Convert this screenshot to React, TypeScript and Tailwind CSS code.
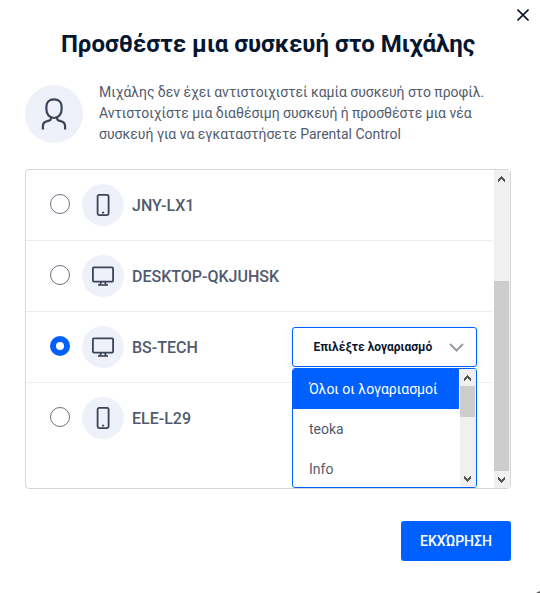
import React, { useState } from 'react';

type DeviceType = 'phone' | 'desktop';

interface Device {
  id: number;
  name: string;
  type: DeviceType;
}

const devices: Device[] = [
  { id: 1, name: 'JNY-LX1', type: 'phone' },
  { id: 2, name: 'DESKTOP-QKJUHSK', type: 'desktop' },
  { id: 3, name: 'BS-TECH', type: 'desktop' },
  { id: 4, name: 'ELE-L29', type: 'phone' },
];

const accounts = ['Όλοι οι λογαριασμοί', 'teoka', 'Info'];

const UserIcon = () => (
  <svg width="26" height="32" viewBox="0 0 26 32" fill="none" stroke="#3a4358" strokeWidth="2.2">
    <path d="M13 1.4C17.6 1.4 20.6 4.2 20.6 8.6V11.6C20.6 16.4 17.4 20 13 20S5.4 16.4 5.4 11.6V8.6C5.4 4.2 8.4 1.4 13 1.4Z" />
    <path d="M10 19.6V20.4C10 21.7 9.2 22.2 8 22.6L5.2 23.5C2.8 24.3 1.9 25.8 1.9 28V31.4" />
    <path d="M16 19.6V20.4C16 21.7 16.8 22.2 18 22.6L20.8 23.5C23.2 24.3 24.1 25.8 24.1 28V31.4" />
  </svg>
);

const PhoneIcon = () => (
  <svg width="14" height="22" viewBox="0 0 14 22" fill="none" stroke="#3a4358" strokeWidth="1.8">
    <rect x="1.6" y="0.9" width="11" height="20.2" rx="1.5" />
    <path d="M6.1 18.6H8.1" />
  </svg>
);

const DesktopIcon = () => (
  <svg width="22" height="20" viewBox="0 0 22 20" fill="none" stroke="#3a4358" strokeWidth="1.8">
    <rect x="0.9" y="1.4" width="20.2" height="14.2" rx="1" />
    <path d="M9 16L8.2 18.8M13 16L13.8 18.8" />
    <path d="M6 19H16" strokeWidth="1.6" />
  </svg>
);

const ArrowUp = () => (
  <svg width="7" height="6" viewBox="0 0 7 6" fill="#555" shapeRendering="crispEdges">
    <path d="M3 0H4V1H5V2H6V3H7V6H6V5H5V4H4V3H3V4H2V5H1V6H0V3H1V2H2V1H3Z" />
  </svg>
);

const ArrowDown = () => (
  <svg width="7" height="6" viewBox="0 0 7 6" fill="#555" shapeRendering="crispEdges">
    <path d="M3 6H4V5H5V4H6V3H7V0H6V1H5V2H4V3H3V2H2V1H1V0H0V3H1V4H2V5H3Z" />
  </svg>
);

const Radio = ({ checked, onClick }: { checked: boolean; onClick: () => void }) => (
  <button
    type="button"
    role="radio"
    aria-checked={checked}
    onClick={onClick}
    className={
      checked
        ? 'size-5 shrink-0 rounded-full border-[6px] border-[#005fff] bg-white'
        : 'size-5 shrink-0 rounded-full border border-[#6b7280] bg-white'
    }
  />
);

const AccountSelect = () => {
  const [active, setActive] = useState(accounts[0]);

  return (
    <div className="relative w-[185px]">
      <button
        type="button"
        className="flex h-10 w-full items-center justify-between rounded-[3px] border border-[#005fff] bg-white pr-3 pl-5 text-xs font-bold text-[#0b1730] shadow-[0_0_8px_rgba(0,95,255,0.12)]"
      >
        <span className="pl-[0.5px] whitespace-nowrap">Επιλέξτε λογαριασμό</span>
        <svg width="15" height="9" viewBox="0 0 15 9" fill="none" stroke="#999ba3" strokeWidth="2">
          <path d="M1 1L7.5 7.5L14 1" />
        </svg>
      </button>

      <div className="absolute top-[41px] left-0 z-10 flex h-[120px] w-full overflow-hidden rounded-[3px] border border-[#005fff] bg-white">
        <ul className="w-[166px]">
          {accounts.map((account) => (
            <li
              key={account}
              onClick={() => setActive(account)}
              className={
                account === active
                  ? 'flex h-10 items-center bg-[#005fff] pl-4 text-sm whitespace-nowrap text-white'
                  : 'flex h-10 items-center pl-4 text-sm whitespace-nowrap text-[#525b6d]'
              }
            >
              {account}
            </li>
          ))}
        </ul>
        <div className="ml-px flex w-4 flex-col bg-[#f0f0f0]">
          <div className="flex h-[17px] items-center pl-1">
            <ArrowUp />
          </div>
          <div className="h-[31px] w-[15px] bg-[#cdcdcd]" />
          <div className="mt-auto flex h-[17px] items-center pl-1">
            <ArrowDown />
          </div>
        </div>
      </div>
    </div>
  );
};

const App = () => {
  const [selected, setSelected] = useState(3);

  return (
    <div className="relative flex h-[593px] w-[540px] flex-col overflow-hidden bg-white font-[Roboto,'Noto_Sans',sans-serif]">
      <div className="flex h-[30px] justify-end pt-[9px] pr-[11px]">
        <button type="button" aria-label="Κλείσιμο" className="size-3">
          <svg width="12" height="12" viewBox="0 0 12 12" stroke="#0b1730" strokeWidth="1.6">
            <path d="M0.5 0.5L11.5 11.5M11.5 0.5L0.5 11.5" />
          </svg>
        </button>
      </div>

      <h1 className="w-[536px] text-center text-2xl leading-7 font-bold whitespace-nowrap text-[#061630]">
        Προσθέστε μια συσκευή στο Μιχάλης
      </h1>

      <div className="mt-6 flex h-[87px] gap-4 pl-[25px]">
        <div className="mt-[3px] flex size-[58px] shrink-0 items-center justify-center rounded-full bg-[#eef1f9]">
          <UserIcon />
        </div>
        <p className="text-sm leading-[21px] tracking-[-0.035px] whitespace-nowrap text-[#525b6d]">
          Μιχάλης δεν έχει αντιστοιχιστεί καμία συσκευή στο προφίλ.
          <br />
          Αντιστοιχίστε μια διαθέσιμη συσκευή ή προσθέστε μια νέα
          <br />
          <span className="tracking-normal">συσκευή για να εγκαταστήσετε Parental Control</span>
        </p>
      </div>

      <div className="ml-[25px] flex h-80 w-[486px] rounded-[4px] border border-[#d5d6d8]">
        <div className="mr-px w-[467px]">
          {devices.map((device) => (
            <div
              key={device.id}
              className="flex h-[71px] items-center border-b border-[#ededee] pr-4 pl-6 last:border-transparent"
            >
              <div className="-mt-0.5 flex">
                <Radio checked={selected === device.id} onClick={() => setSelected(device.id)} />
              </div>
              <div className="ml-3 flex size-[42px] items-center justify-center rounded-full bg-[#eef1f9]">
                {device.type === 'phone' ? <PhoneIcon /> : <DesktopIcon />}
              </div>
              <span className="mt-0.5 ml-2 font-medium text-[#525b6d]">{device.name}</span>
              {selected === device.id && (
                <div className="ml-auto">
                  <AccountSelect />
                </div>
              )}
            </div>
          ))}
        </div>
        <div className="flex w-4 flex-col bg-[#f0f0f0]">
          <div className="flex h-[18px] items-center pl-1">
            <ArrowUp />
          </div>
          <div className="mt-auto h-[190px] w-[15px] bg-[#cdcdcd]" />
          <div className="flex h-[17px] items-center pl-1">
            <ArrowDown />
          </div>
        </div>
      </div>

      <div className="mt-8 flex justify-end pr-[29px]">
        <button
          type="button"
          className="h-10 w-[110px] rounded-[3px] bg-[#005fff] text-sm font-medium text-white"
        >
          ΕΚΧΏΡΗΣΗ
        </button>
      </div>

      <svg className="absolute right-0 bottom-0" width="4" height="2" viewBox="0 0 4 2" fill="#555">
        <path d="M0 2L4 0V2Z" />
      </svg>
    </div>
  );
};

export default App;
